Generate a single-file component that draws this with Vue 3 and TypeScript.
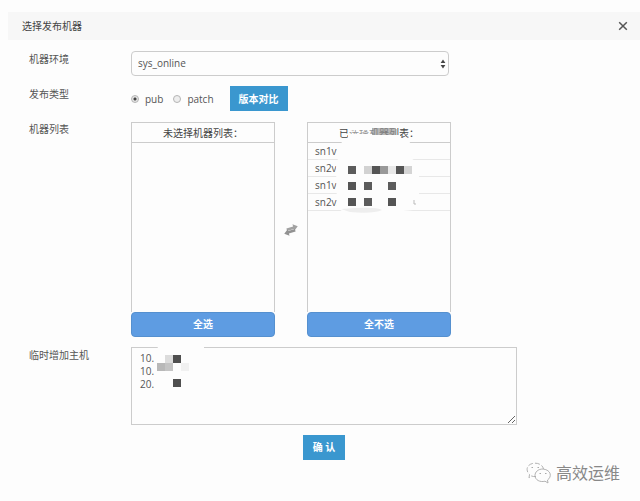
<script setup lang="ts">
import { ref } from 'vue'

interface Block {
  x: number
  y: number
  fill: string
}

const environment = ref('sys_online')
const publishType = ref('pub')
const selected = ref(['sn1v', 'sn2v', 'sn1v', 'sn2v.'])
const extraHosts = ref('10.\n10.\n20.')

const listBlocks: Block[] = [
  { x: 40, y: 43, fill: '#5c5c5c' },
  { x: 56, y: 43, fill: '#d2d2d2' },
  { x: 64, y: 43, fill: '#555' },
  { x: 72, y: 43, fill: '#999' },
  { x: 80, y: 43, fill: '#e8e8e8' },
  { x: 88, y: 43, fill: '#555' },
  { x: 96, y: 43, fill: '#d4d4d4' },
  { x: 40, y: 59, fill: '#555' },
  { x: 56, y: 59, fill: '#5c5c5c' },
  { x: 80, y: 59, fill: '#5c5c5c' },
  { x: 40, y: 75, fill: '#555' },
  { x: 56, y: 75, fill: '#5c5c5c' },
  { x: 80, y: 75, fill: '#555' },
]

const hostBlocks: Block[] = [
  { x: 34, y: 8, fill: '#dcdcdc' },
  { x: 42, y: 8, fill: '#4f4f4f' },
  { x: 26, y: 16, fill: '#b8b8b8' },
  { x: 34, y: 16, fill: '#c4c4c4' },
  { x: 50, y: 16, fill: '#f1f1f1' },
  { x: 42, y: 32, fill: '#4f4f4f' },
]
</script>

<template>
  <main class="dialog">
    <header class="head">
      <h1>选择发布机器</h1>
      <button class="close" type="button" aria-label="关闭">
        <svg width="10" height="10" viewBox="0 0 10 10">
          <path d="M1.200 1.200 8.800 8.800M8.800 1.200 1.200 8.800" stroke="#555" stroke-width="1.500" fill="none" />
        </svg>
      </button>
    </header>

    <form class="form" @submit.prevent>
      <label class="name" for="env">机器环境</label>
      <div class="select">
        <select id="env" v-model="environment">
          <option>sys_online</option>
        </select>
        <svg class="arrows" width="6" height="10" viewBox="0 0 6 10">
          <path d="M3 .5 5.400 4H.6ZM3 9.500 5.400 6H.6Z" fill="#444" />
        </svg>
      </div>

      <span id="type-name" class="name">发布类型</span>
      <div class="types" role="radiogroup" aria-labelledby="type-name">
        <label><input v-model="publishType" type="radio" name="type" value="pub" />pub</label>
        <label><input v-model="publishType" type="radio" name="type" value="patch" />patch</label>
        <button class="solid" type="button">版本对比</button>
      </div>

      <span class="name">机器列表</span>
      <div class="lists">
        <section class="list">
          <div class="box">
            <h2>未选择机器列表：</h2>
          </div>
          <button class="all" type="button">全选</button>
        </section>
        <svg class="swap" width="16" height="12" viewBox="0 0 16 12">
          <g transform="rotate(-16 8 6)">
            <path d="M4 3.200H11V.8L15.500 4.300 11 7.600V5.900H4Z" fill="#a2a2a2" />
            <path d="M12 6.100H5V4.400L.5 7.700 5 11.200V8.800H12Z" fill="#929292" />
          </g>
        </svg>
        <section class="list">
          <div class="box">
            <h2>已选择机器列表：</h2>
            <ul>
              <li v-for="(host, i) in selected" :key="i">{{ host }}</li>
            </ul>
            <svg class="mask" width="142" height="94" viewBox="0 0 142 94">
              <path d="M40 4H64V7H40ZM40 11H64V16H40Z" fill="#fdfdfd" />
              <path d="M40 7H64V11H40Z" fill="#fdfdfd" opacity=".45" />
              <path d="M64 5H88V12H64Z" fill="#999" opacity=".7" />
              <path d="M64 12H92V17H64Z" fill="#fdfdfd" />
              <path d="M34 18Q65 14 99 17 109 24 103 35L111 41V73L105 87Q84 90 68 88L36 90 29 84 28 44Z" fill="#fdfdfd" />
              <path d="M33 86Q68 83 74 87 65 91 42 89Z" fill="#eee" />
              <path d="M106 77V81H108" fill="none" stroke="#bbb" />
              <rect v-for="(b, i) in listBlocks" :key="i" :x="b.x" :y="b.y" width="8" height="8" :fill="b.fill" />
            </svg>
          </div>
          <button class="all" type="button">全不选</button>
        </section>
      </div>

      <label class="name" for="hosts">临时增加主机</label>
      <div class="hosts">
        <textarea id="hosts" v-model="extraHosts"></textarea>
        <svg class="mask" width="80" height="54" viewBox="0 0 80 54">
          <path d="M27 0H73V8L69 44 59 49H26L23 44V8Z" fill="#fdfdfd" />
          <rect v-for="(b, i) in hostBlocks" :key="i" :x="b.x" :y="b.y" width="8" height="8" :fill="b.fill" />
        </svg>
      </div>

      <div class="actions">
        <button class="solid" type="submit">确 认</button>
      </div>
    </form>

    <footer class="brand">
      <svg width="26" height="22" viewBox="0 0 26 22" fill="none" stroke="#aaa" stroke-width=".9">
        <path d="M10 14.500Q7.500 14.800 5.500 14L3 16 3.500 12.500C-1 8 1 2 8 1.200 13 .8 17 3.500 17.500 7" stroke-dasharray="5 2" />
        <path d="M17 7C12 7 9 10 9 13.500 9 18 14 20.500 19 19.200L22 21 21.500 18C26 15 25.500 8 17 7Z" />
        <path d="M5.500 5.500H7M11.500 5.500H13M13.500 11.500H15M19 11.500H20.500" stroke-width="1.200" />
      </svg>
      <span>高效运维</span>
    </footer>
  </main>
</template>

<style>
body {
  margin: 0;
  background: #fdfdfd;
}
</style>

<style scoped>
* {
  box-sizing: border-box;
}
.dialog {
  padding: 12px 0 0 8px;
  color: #555;
  font: 10px/16px "Open Sans", "Noto Sans CJK SC", sans-serif;
}
.head {
  display: flex;
  align-items: center;
  justify-content: space-between;
  height: 28px;
  padding: 0 12px 0 14px;
  background: #f7f7f7;
}
h1,
h2 {
  margin: 0;
  font-size: 10px;
  font-weight: 400;
  color: #444;
}
button,
select,
textarea {
  font: inherit;
  color: inherit;
}
button {
  border: 0;
  padding: 0;
}
.close {
  display: flex;
  background: none;
}
.form {
  display: grid;
  grid-template-columns: 102px minmax(0, 1fr);
  row-gap: 10px;
  padding: 11px 20px 0 21px;
}
.select {
  position: relative;
  width: 100%;
  max-width: 318px;
}
.select select {
  display: block;
  appearance: none;
  width: 100%;
  height: 25px;
  padding: 0 6px 2px;
  border: 1px solid #ccc;
  border-radius: 4px;
  background: #fdfdfd;
}
.arrows {
  position: absolute;
  top: 8px;
  right: 3px;
}
.types {
  display: flex;
  align-items: center;
  height: 25px;
}
.types label {
  display: flex;
  align-items: center;
  gap: 6px;
  margin-right: 10px;
}
.types .solid {
  margin-left: 6px;
}
.types input {
  appearance: none;
  width: 8px;
  height: 8px;
  margin: 0;
  border: 1px solid #b5b5b5;
  border-radius: 50%;
  background: #eee;
}
.types input:checked {
  background: radial-gradient(circle, #444 0 1px, #e4e4e4 2px);
}
.solid {
  height: 25px;
  padding: 0 9px;
  background: #3a97cf;
  color: #fff;
  font-weight: 700;
}
.lists {
  display: flex;
  align-items: center;
  gap: 8px;
  padding-top: 1px;
}
.list {
  flex: 0 1 144px;
}
.box {
  position: relative;
  height: 190px;
  border: 1px solid #ccc;
  border-bottom: 0;
}
h2 {
  height: 20px;
  border-bottom: 1px solid #ccc;
  line-height: 20px;
  text-align: center;
}
ul {
  margin: 0;
  padding: 0;
  list-style: none;
}
li {
  height: 17px;
  padding-left: 7px;
  border-bottom: 1px solid #e8e8e8;
}
.mask {
  position: absolute;
  top: 0;
  left: 0;
  pointer-events: none;
}
.all {
  display: block;
  width: 100%;
  height: 25px;
  padding-bottom: 2px;
  border: 1px solid #5590cf;
  border-radius: 4px;
  background: #5e9ce2;
  color: #fff;
  font-weight: 700;
}
.hosts {
  position: relative;
  width: 100%;
  max-width: 386px;
}
textarea {
  display: block;
  width: 100%;
  height: 78px;
  padding: 4px 8px;
  border: 1px solid #ccc;
  background: #fdfdfd;
  line-height: 13px;
  resize: both;
}
.actions {
  grid-column: 2;
  width: 100%;
  max-width: 386px;
  text-align: center;
}
.actions .solid {
  padding: 0 10px 2px;
}
.brand {
  display: flex;
  align-items: center;
  justify-content: flex-end;
  gap: 4px;
  padding: 1px 20px 0 0;
  color: #888;
  font-size: 16px;
  line-height: 24px;
}
</style>
